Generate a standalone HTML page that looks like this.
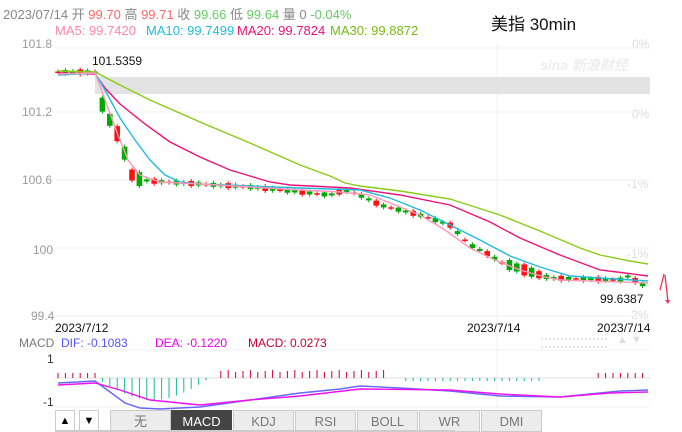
<!DOCTYPE html>
<html><head><meta charset="utf-8">
<style>
body{margin:0;width:682px;height:432px;background:#fff;overflow:hidden;font-family:"Liberation Sans","Noto Sans CJK SC",sans-serif;position:relative}
.t{position:absolute;white-space:nowrap;font-size:12px}
.tab{position:absolute;top:410px;height:22px;width:61px;background:#ececec;border:1px solid #ccc;box-sizing:border-box;text-align:center;line-height:21px;font-size:13px;color:#777}
</style></head><body>
<div class="t" style="left:3px;top:4px;color:#888;font-size:13px">2023/07/14 开 <span style="color:#f66">99.70</span> 高 <span style="color:#f66">99.71</span> 收 <span style="color:#6c6">99.66</span> 低 <span style="color:#6c6">99.64</span> 量 0 <span style="color:#6c6">-0.04%</span></div>
<div class="t" style="left:55px;top:23px;color:#f8a;font-size:13px">MA5: 99.7420</div>
<div class="t" style="left:146px;top:23px;color:#2bd;font-size:13px">MA10: 99.7499</div>
<div class="t" style="left:237px;top:23px;color:#e17;font-size:13px">MA20: 99.7824</div>
<div class="t" style="left:330px;top:23px;color:#7b1;font-size:13px">MA30: 99.8872</div>
<div class="t" style="left:491px;top:10px;font-size:17px;color:#111">美指 30min</div>
<div class="t" style="left:22px;top:37px;color:#999">101.8</div>
<div class="t" style="left:22px;top:105px;color:#999">101.2</div>
<div class="t" style="left:22px;top:173px;color:#999">100.6</div>
<div class="t" style="left:33px;top:243px;color:#999">100</div>
<div class="t" style="left:31px;top:309px;color:#999">99.4</div>
<div class="t" style="left:632px;top:37px;color:#ddd">0%</div>
<div class="t" style="left:632px;top:107px;color:#ddd">0%</div>
<div class="t" style="left:627px;top:177px;color:#ddd">-1%</div>
<div class="t" style="left:627px;top:247px;color:#ddd">-1%</div>
<div class="t" style="left:627px;top:308px;color:#ddd">-2%</div>
<div class="t" style="left:92px;top:54px;color:#111">101.5359</div>
<div class="t" style="left:600px;top:292px;color:#111">99.6387</div>
<div class="t" style="left:55px;top:321px;color:#111">2023/7/12</div>
<div class="t" style="left:467px;top:321px;color:#111">2023/7/14</div>
<div class="t" style="left:597px;top:321px;color:#111">2023/7/14</div>
<div class="t" style="left:19px;top:336px;color:#777">MACD <span style="color:#55f">&nbsp;DIF: -0.1083</span></div>
<div class="t" style="left:155px;top:336px;color:#e0e">DEA: -0.1220</div>
<div class="t" style="left:248px;top:336px;color:#c03">MACD: 0.0273</div>
<div class="t" style="left:47px;top:352px;color:#333">1</div>
<div class="t" style="left:43px;top:395px;color:#333">-1</div>
<div class="t" style="left:617px;top:334px;color:#ddd;font-size:11px">▲ ▼</div>
<div style="position:absolute;left:541px;top:338px;width:66px;height:6px;border-top:2px dotted #e5e5e5;border-bottom:2px dotted #e5e5e5"></div>
<svg width="682" height="432" style="position:absolute;left:0;top:0" id="s">
<g stroke="#f2f2f2" stroke-width="1">
<line x1="55" y1="48" x2="650" y2="48"/><line x1="55" y1="112" x2="650" y2="112"/><line x1="55" y1="180" x2="650" y2="180"/><line x1="55" y1="248" x2="650" y2="248"/><line x1="55" y1="316" x2="650" y2="316"/>
<line x1="497" y1="44" x2="497" y2="408"/><line x1="55" y1="350" x2="650" y2="350"/><line x1="55" y1="407" x2="650" y2="407"/>
</g>
<rect x="95" y="77" width="555" height="17" fill="#e3e3e3"/>
<text x="540" y="70" fill="#eee" font-size="14" font-style="italic" font-weight="bold" font-family="Liberation Sans,Noto Sans CJK SC,sans-serif">sina 新浪财经</text>
<line x1="55" y1="378" x2="650" y2="378" stroke="#ddd"/>
<g id="c"></g>
<g fill="none" stroke-width="1.4">
<polyline stroke="#8c1" points="58,71 95,72 120,85 150,100 200,122 250,143 300,165 330,176 345,183 360,186 400,191 450,199 500,215 540,231 580,248 600,255 630,261 648,264"/>
<polyline stroke="#e17" points="58,73 95,74 105,88 120,104 145,124 170,142 200,157 230,170 250,176 270,182 290,185 350,188 400,195 450,205 490,222 520,238 560,255 600,270 625,273 648,276"/>
<polyline stroke="#2bd" points="58,75 95,73 105,90 120,118 135,140 150,160 165,175 180,182 200,184 300,188 360,190 390,198 420,210 450,225 480,240 510,256 540,267 570,276 600,278 648,281"/>
<polyline stroke="#f9b" points="58,74 95,73 100,86 108,108 118,135 128,160 140,175 160,182 200,184 300,190 340,192 370,195 395,205 420,215 445,230 470,248 495,260 520,270 545,277 560,280 648,283"/>
<polyline stroke="#66f" points="58,383 95,381 110,392 125,403 140,408 160,409 200,407 250,400 300,393 340,389 360,386 400,388 450,391 480,394 500,396 560,397 620,391 648,390"/>
<polyline stroke="#e1e" points="58,385 95,383 120,390 150,400 200,405 250,400 300,396 360,389 450,390 500,394 560,397 610,393 648,392"/>
</g>
<path d="M660 290 L664 274 M665 275 L668 302" stroke="#e35" stroke-width="1.3" fill="none"/>
<path d="M665 300 l3 4 l2 -4z" fill="#e35"/>
</svg>
<div style="position:absolute;left:55px;top:410px;width:20px;height:22px;border:1px solid #ccc;box-sizing:border-box;text-align:center;line-height:21px;font-size:11px">▲</div>
<div style="position:absolute;left:79px;top:410px;width:20px;height:22px;border:1px solid #ccc;box-sizing:border-box;text-align:center;line-height:21px;font-size:11px">▼</div>
<div class="tab" style="left:110px">无</div>
<div class="tab" style="left:171px;background:#444;color:#fff;border-color:#444">MACD</div>
<div class="tab" style="left:233px">KDJ</div>
<div class="tab" style="left:295px">RSI</div>
<div class="tab" style="left:357px">BOLL</div>
<div class="tab" style="left:419px">WR</div>
<div class="tab" style="left:481px">DMI</div>
<div style="position:absolute;left:55px;top:430px;width:400px;height:2px;background:#ccc"></div>
<script>
var P=[[58,72],[95,72],[100,95],[105,115],[112,122],[120,140],[127,160],[133,178],[150,181],[200,184],[250,187],[300,192],[330,195],[345,190],[360,195],[380,205],[420,215],[450,225],[470,245],[490,255],[500,262],[540,275],[550,278],[620,280],[625,275],[640,283],[648,288]];
function f(x){for(var i=0;i<P.length-1;i++){if(x<=P[i+1][0]){var a=P[i],b=P[i+1];return a[1]+(b[1]-a[1])*(x-a[0])/(b[0]-a[0]);}}return 288;}
var h='',m='';
for(var i=0;i<80;i++){var x=58+i*7.4;var y=f(x);var r=((i*7)%5)<2;var len=((i*13)%5)+1;if(i>5&&i<12)len+=10;if(i>60&&i<66)len+=6;var c=r?'#f11':'#0a0';
h+='<line x1="'+x+'" y1="'+(y-len/2-2)+'" x2="'+x+'" y2="'+(y+len/2+2)+'" stroke="'+c+'"/>';
h+='<rect x="'+(x-2.8)+'" y="'+(y-len/2)+'" width="5.6" height="'+Math.max(len,1.5)+'" fill="'+c+'"/>';
var v;if(x<96)v=-5;else if(x<210)v=Math.sin((x-96)/114*Math.PI)*22;else if(x<220)v=0;else if(x<385)v=-(6+((i%3)));else if(x<405)v=0;else if(x<545)v=3;else if(x<595)v=0;else v=-5;
if(v!=0)m+='<line x1="'+x+'" y1="378" x2="'+x+'" y2="'+(378+v)+'" stroke="'+(v<0?'#c03':'#1b9')+'"/>';}
document.getElementById('c').innerHTML=h+m;
</script>
</body></html>
